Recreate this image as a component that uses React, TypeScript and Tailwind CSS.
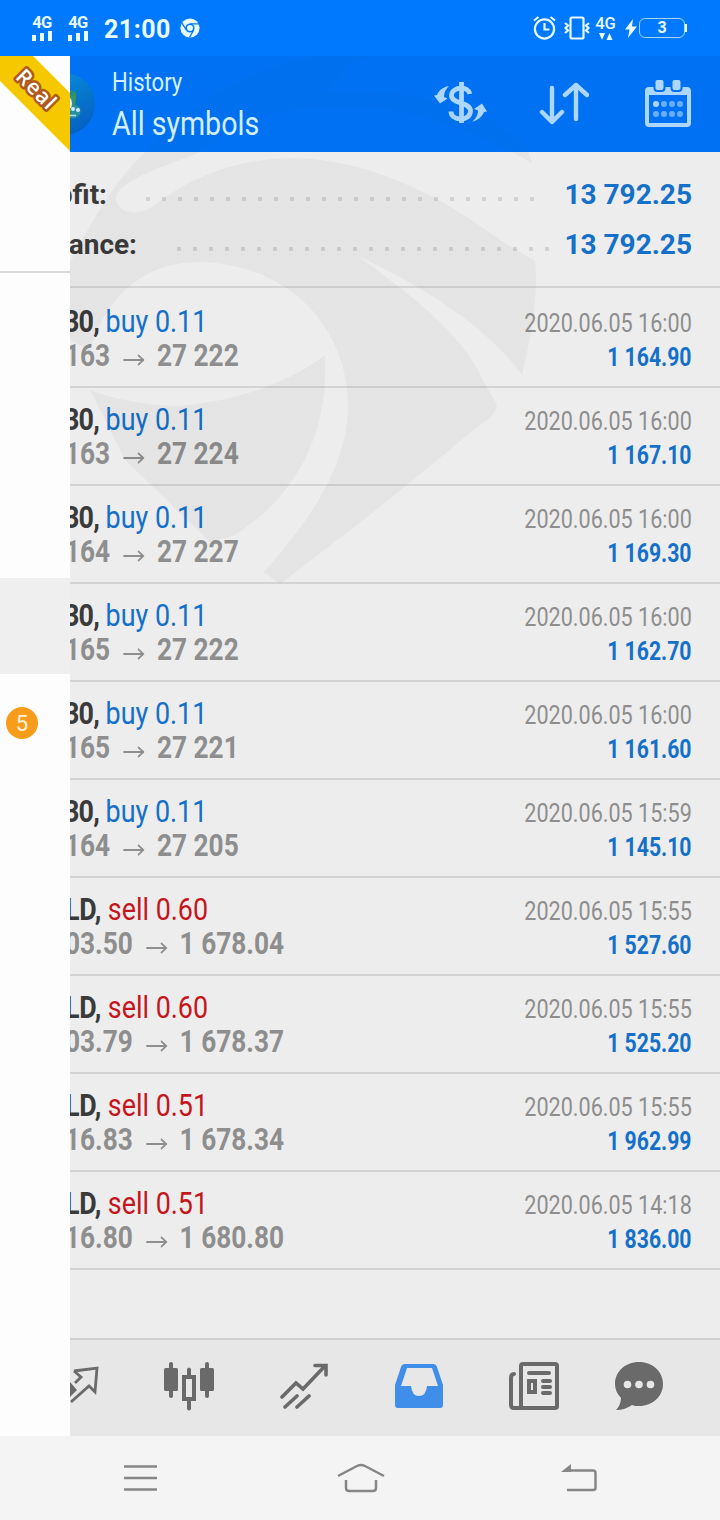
import { clsx } from "clsx";

type Deal = {
  symbol: string;
  side: "buy" | "sell";
  volume: string;
  open: string;
  close: string;
  time: string;
  profit: string;
};

const deals: Deal[] = [
  { symbol: "30", side: "buy", volume: "0.11", open: "163", close: "27 222", time: "2020.06.05 16:00", profit: "1 164.90" },
  { symbol: "30", side: "buy", volume: "0.11", open: "163", close: "27 224", time: "2020.06.05 16:00", profit: "1 167.10" },
  { symbol: "30", side: "buy", volume: "0.11", open: "164", close: "27 227", time: "2020.06.05 16:00", profit: "1 169.30" },
  { symbol: "30", side: "buy", volume: "0.11", open: "165", close: "27 222", time: "2020.06.05 16:00", profit: "1 162.70" },
  { symbol: "30", side: "buy", volume: "0.11", open: "165", close: "27 221", time: "2020.06.05 16:00", profit: "1 161.60" },
  { symbol: "30", side: "buy", volume: "0.11", open: "164", close: "27 205", time: "2020.06.05 15:59", profit: "1 145.10" },
  { symbol: "LD", side: "sell", volume: "0.60", open: "03.50", close: "1 678.04", time: "2020.06.05 15:55", profit: "1 527.60" },
  { symbol: "LD", side: "sell", volume: "0.60", open: "03.79", close: "1 678.37", time: "2020.06.05 15:55", profit: "1 525.20" },
  { symbol: "LD", side: "sell", volume: "0.51", open: "16.83", close: "1 678.34", time: "2020.06.05 15:55", profit: "1 962.99" },
  { symbol: "LD", side: "sell", volume: "0.51", open: "16.80", close: "1 680.80", time: "2020.06.05 14:18", profit: "1 836.00" },
];

function Signal() {
  return (
    <div className="flex w-5 flex-col items-center">
      <span className="text-[16.5px] leading-[13px] font-bold tracking-[-0.5px]">4G</span>
      <svg className="mt-[2px] h-[10px] w-5" viewBox="0 0 20 10" fill="currentColor">
        <rect x="0" y="4" width="4" height="6" />
        <rect x="8" y="2" width="4" height="8" />
        <rect x="16" y="0" width="4" height="10" />
      </svg>
    </div>
  );
}

function StatusBar() {
  return (
    <div className="flex h-14 items-center bg-[#0079ff] pr-[32px] pl-8 text-[#e9fbff]">
      <Signal />
      <div className="w-4" />
      <Signal />
      <span className="ml-4 w-[67px] pt-[3px] text-[25px] leading-7 font-bold tracking-[0.5px] whitespace-nowrap">21:00</span>
      <svg className="ml-[9px] size-5" viewBox="0 0 20 20">
        <circle cx="10" cy="10" r="9.6" fill="currentColor" />
        <circle cx="10" cy="10" r="4.6" fill="#0079ff" />
        <circle cx="10" cy="10" r="3" fill="currentColor" />
        <path d="M10 5.8h9M6.3 12 1.8 4.8M13.6 12.2 9.5 19.4" stroke="#0079ff" strokeWidth="1.3" />
      </svg>
      <svg className="ml-auto h-[24px] w-[23px]" viewBox="0 0 23 24" fill="none" stroke="currentColor" strokeWidth="2.2">
        <circle cx="11.5" cy="13" r="9.6" />
        <path d="M11.5 7v6.5h5M1 4.5 5.5 1M22 4.5 17.5 1" />
      </svg>
      <svg className="ml-[8px] h-[24px] w-[26px]" viewBox="0 0 26 24" fill="none" stroke="currentColor" strokeWidth="2.2">
        <rect x="6.5" y="1.5" width="13" height="21" rx="1.5" />
        <path d="M1 7l3 2.5-2.5 2.5 2.5 2.5L1 17M25 7l-3 2.5 2.5 2.5-2.5 2.5L25 17" />
      </svg>
      <div className="ml-[5px] flex w-[21px] flex-col items-center">
        <span className="text-[16.5px] leading-[14px] font-medium">4G</span>
        <svg className="mt-px h-[8px] w-[14px]" viewBox="0 0 14 8" fill="currentColor">
          <path d="M0 1h6L3 8zM7.5 8h6l-3-7z" />
        </svg>
      </div>
      <svg className="ml-[9px] h-[19px] w-[12px]" viewBox="0 0 12 19" fill="currentColor">
        <path d="M8 0 0 10.5h4.5L3 19 12 7.5H7z" />
      </svg>
      <div className="ml-[2px] flex h-[20px] w-[46px] items-center justify-center rounded-[6px] border-[1.5px] border-[#9fd9ff] text-[16px] font-bold">
        3
      </div>
      <div className="mr-px h-[8px] w-[2px] bg-current" />
    </div>
  );
}

function Header() {
  return (
    <header className="flex h-24 items-center overflow-hidden bg-[#0071f2] pr-[29px] text-[#d5f0ff]">
      <svg className="h-[64px] w-[26px] shrink-0" viewBox="0 0 26 64">
        <defs>
          <linearGradient id="sea" x1="0" y1="0" x2="0.6" y2="1">
            <stop offset="0" stopColor="#0a93e6" />
            <stop offset="0.6" stopColor="#0677cc" />
            <stop offset="1" stopColor="#0462c4" />
          </linearGradient>
        </defs>
        <circle cx="-6" cy="32" r="31" fill="url(#sea)" />
        <path d="M0 22c4 1 5 5 5 11 4 0 7 4 5 9-2 4-6 5-10 4z" fill="#2b8fa0" />
        <path d="M0 26c2 2 2.500 6 1 10H0z" fill="#fff" />
        <path d="M1 19c3 3 4 8 3 15M4 33c2-7 2-10 0-14" fill="none" stroke="#3f9a3c" strokeWidth="1.5" />
        <circle cx="3" cy="37" r="2" fill="#cfeeff" />
        <circle cx="8" cy="38" r="2" fill="#cfeeff" />
        <path d="M0 43.5h6" stroke="#a9dcf5" strokeWidth="1.5" />
      </svg>
      <div className="ml-4 flex flex-col pt-px">
        <span className="origin-left scale-x-[0.85] text-[26px] leading-[36px] whitespace-nowrap">History</span>
        <span className="origin-left scale-x-[0.842] text-[34px] leading-[46px] whitespace-nowrap">All symbols</span>
      </div>
      <div className="ml-auto flex items-center pb-[3px] text-[#add7ff]">
        <svg className="h-[44px] w-[54px]" viewBox="0 0 54 44" fill="none" stroke="currentColor">
          <path d="M36 13c-1-4-5-6-9-6-5 0-9.500 3-9.500 7.500 0 9 19 6 19 15.500 0 5-4.500 8-9.500 8-6 0-10-3-10-7.500" strokeWidth="4.800" />
          <path d="M27.500 1v41" strokeWidth="4.800" />
          <path d="M15 5C8 6 4 11 3 14L0 14.500 6 22.500 13.500 17.500 10 16C10 11 12 8 15 5z" fill="currentColor" stroke="none" />
          <path d="M38 41c7-2 11-7 12-10l3-.5L48 22.500 40 28l4 1.500c0 5-3 9-6 11.500z" fill="currentColor" stroke="none" />
        </svg>
        <svg className="ml-[51px] h-[44px] w-[50px]" viewBox="0 0 50 44" fill="none" stroke="currentColor" strokeWidth="4.4" strokeLinecap="round" strokeLinejoin="round">
          <path d="M13 7v34M3 31l10 10 10-10M37 38V4M26 14 37 4l11 10" />
        </svg>
        <svg className="ml-[56px] h-[48px] w-[46px]" viewBox="0 0 46 48" fill="currentColor">
          <rect x="2" y="10" width="42" height="36" rx="2" fill="none" stroke="currentColor" strokeWidth="4" />
          <path d="M2 9h42v7H2z" />
          <rect x="9.5" y="0" width="10" height="12" rx="3" stroke="#0071f2" strokeWidth="2" />
          <rect x="26.5" y="0" width="10" height="12" rx="3" stroke="#0071f2" strokeWidth="2" />
          <circle cx="11" cy="25" r="3" />
          <g opacity="0.6">
            <circle cx="19" cy="25" r="3" />
            <circle cx="27" cy="25" r="3" />
            <circle cx="35" cy="25" r="3" />
            <circle cx="11" cy="35" r="3" />
            <circle cx="19" cy="35" r="3" />
            <circle cx="27" cy="35" r="3" />
            <circle cx="35" cy="35" r="3" />
          </g>
        </svg>
      </div>
    </header>
  );
}

function Summary() {
  return (
    <section className="flex h-[136px] shrink-0 flex-col overflow-hidden border-b-2 border-[#d4d4d4] pt-[18px] pr-7 text-[28px] leading-[50px] font-bold text-[#3a3a3a]">
      <div className="flex">
        <span className="-ml-[15px] flex w-[52px] justify-end">ofit:</span>
        <div className="ml-[33px] h-4 w-[400px] translate-y-[21px] bg-[radial-gradient(circle,#d2d2d2_2px,transparent_2.600px)] bg-[length:16px_16px]" />
        <span className="ml-auto text-[#1470c8]">13 792.25</span>
      </div>
      <div className="flex">
        <span className="-ml-[14px] flex w-[81px] justify-end">ance:</span>
        <div className="ml-[34px] h-4 w-[384px] translate-y-[21px] bg-[radial-gradient(circle,#d2d2d2_2px,transparent_2.600px)] bg-[length:16px_16px]" />
        <span className="ml-auto text-[#1470c8]">13 792.25</span>
      </div>
    </section>
  );
}

function DealRow({ deal }: { deal: Deal }) {
  const buy = deal.side === "buy";
  return (
    <li className="flex h-[98px] justify-between overflow-hidden border-b-2 border-[#d4d4d4] pr-7 leading-[34px] whitespace-nowrap">
      <div className="flex flex-col items-start pt-[14px] text-[32px]">
        <span className={clsx("origin-left scale-x-[0.84]", buy ? "-ml-[6px]" : "-ml-[5px]")}>
          <b className={clsx("text-[#3a3a3a]", buy ? "tracking-[-1px]" : "tracking-[-0.4px]")}>{deal.symbol},</b>{" "}
          <span className={buy ? "text-[#1470c8]" : "text-[#c4161c]"}>
            {deal.side} {deal.volume}
          </span>
        </span>
        <span className="-ml-[5px] flex origin-left scale-x-[0.82] font-bold text-[#8e8e8e]">
          {deal.open}
          <svg className="mr-[15px] ml-[16px] mt-[16px] h-[12px] w-[26px]" viewBox="0 0 26 12" fill="none" stroke="currentColor" strokeWidth="2">
            <path d="M0 6h24M18 1l6.5 5L18 11" />
          </svg>
          {deal.close}
        </span>
      </div>
      <div className="flex flex-col items-end pt-[16px] text-[26px]">
        <span className="origin-right scale-x-[0.83] text-[#8e8e8e]">{deal.time}</span>
        <span className="origin-right scale-x-[0.815] font-bold text-[#1470c8]">{deal.profit}</span>
      </div>
    </li>
  );
}

function TabBar() {
  return (
    <nav className="flex h-[98px] shrink-0 items-center border-t-2 border-[#d0d0d0] bg-[#e7e7e7] pb-1 text-[#6a6a6a]">
      <div className="w-[61.5px] pb-1">
        <svg className="h-[40px] w-[30px]" viewBox="0 0 30 40" fill="none" stroke="currentColor" strokeWidth="2.8">
          <path d="M4 7l23-3-2 24-6-6L1 38M4 7l7 6-6 6" />
          <path d="M0 18l7 8-7 7z" fill="currentColor" stroke="none" />
        </svg>
      </div>
      <div className="flex w-[115px] justify-center">
        <svg className="h-[50px] w-[50px]" viewBox="0 0 50 50" fill="currentColor">
          <rect x="0" y="7" width="14" height="23" rx="1.5" />
          <rect x="5" y="1" width="4" height="36" rx="2" />
          <rect x="36" y="7" width="14" height="23" rx="1.5" />
          <rect x="41" y="1" width="4" height="36" rx="2" />
          <rect x="20" y="16" width="10" height="22" fill="none" stroke="currentColor" strokeWidth="4" />
          <path d="M23 8q2-3 4 0v7h-4zM23 39h4v9q-2 3-4 0z" />
        </svg>
      </div>
      <div className="flex w-[115px] justify-center">
        <svg className="h-[46px] w-[48px]" viewBox="0 0 48 46" fill="none" stroke="currentColor" strokeWidth="3.6" strokeLinecap="round">
          <path d="M2 34 16 20l7 6L45 3M35 2.5h11V12M5 44l12-11M17 44l12-11" />
        </svg>
      </div>
      <div className="flex w-[115px] justify-center">
        <svg className="h-[46px] w-[48px]" viewBox="0 0 48 46">
          <path fill="#3f8eea" fillRule="evenodd" d="M10 1h28q3 0 4 3l6 18v20q0 3-3 3H3q-3 0-3-3V22L6 4q1-3 4-3zM12 5 6 23h10q1 10 8 10t8-10h11L37 5z" />
        </svg>
      </div>
      <div className="flex w-[115px] justify-center">
        <svg className="h-[48px] w-[50px]" viewBox="0 0 50 48" fill="none" stroke="currentColor" strokeWidth="4" strokeLinecap="round">
          <rect x="12" y="2" width="36" height="44" rx="2" />
          <path d="M5 12q-3 0-3 4v27q0 3 3 3h7M20 11h20M34 19h7M34 25h7M34 31h7" />
          <rect x="20" y="19" width="6" height="11" />
        </svg>
      </div>
      <div className="flex w-[95px] justify-center">
        <svg className="h-[48px] w-[48px]" viewBox="0 0 48 48">
          <path fill="currentColor" d="M24 0c14 0 24 10 24 22S38 44 24 44c-3 0-5 0-7-1-4 3-10 5-16 5 3-3 5-8 5-12-4-4-6-9-6-14C0 10 10 0 24 0z" />
          <g fill="#e7e7e7">
            <circle cx="12.5" cy="22.5" r="3.8" />
            <circle cx="24" cy="22.5" r="3.8" />
            <circle cx="35.5" cy="22.5" r="3.8" />
          </g>
        </svg>
      </div>
    </nav>
  );
}

// Account drawer, only its right edge is on screen while it slides in
function Drawer() {
  return (
    <aside className="flex w-[70px] shrink-0 flex-col bg-[#fdfdfd]">
      <div className="h-[217px] border-b-2 border-[#d8d8d8]">
        <svg className="h-[96px] w-[70px]" viewBox="0 0 70 96">
          <path d="M0 0h33l37 37v58L0 25z" fill="#f5c800" />
          <text
            x="0"
            y="0"
            transform="translate(37 33) rotate(45)"
            textAnchor="middle"
            dominantBaseline="central"
            className="fill-white stroke-[#b0591c] stroke-[5px] font-['Open_Sans'] text-[21px] font-semibold tracking-[1px] [paint-order:stroke] [stroke-linejoin:round]"
          >
            Real
          </text>
        </svg>
      </div>
      <div className="mt-[305px] h-[96px] bg-[#efefef]" />
      <div className="mt-[33px] ml-[6px] flex size-8 items-center justify-center rounded-full bg-[#f89c1c] text-[22px] text-[#fff3dc]">
        5
      </div>
    </aside>
  );
}

function SystemBar() {
  return (
    <div className="flex h-[84px] items-center bg-[#f4f4f4]">
      <svg className="ml-[124px] h-[26px] w-[33px]" viewBox="0 0 33 26" stroke="#868686" strokeWidth="2.6">
        <path d="M0 1.5h33M0 13h33M0 24.5h33" />
      </svg>
      <svg className="ml-[180px] h-[30px] w-[48px]" viewBox="0 0 48 30" fill="none" stroke="#868686" strokeWidth="2.5">
        <path d="M1 13 20 3q4-2 8 0l19 10M9 17v8q0 3 3 3h24q3 0 3-3v-8" />
      </svg>
      <svg className="ml-[176px] h-[28px] w-[36px]" viewBox="0 0 36 28" fill="none" stroke="#868686" strokeWidth="2.5">
        <path d="M8 6.5h24q2.5 0 2.5 2.5v15q0 2-2.5 2H6" />
        <path d="M0 8 10 0v8z" fill="#868686" stroke="none" />
      </svg>
    </div>
  );
}

// Fainter over the blue header than over the list
function Watermark() {
  return (
    <svg className="pointer-events-none absolute top-0 right-0 h-[540px] w-[650px]" viewBox="70 56 650 540" fill="url(#fade)">
      <defs>
        <linearGradient id="fade" gradientUnits="userSpaceOnUse" x1="0" y1="56" x2="0" y2="596">
          <stop offset="0.178" stopColor="#000" stopOpacity="0.012" />
          <stop offset="0.178" stopColor="#000" stopOpacity="0.036" />
        </linearGradient>
      </defs>
      <path d="M145 152C190 105 250 66 320 56H372L345 66Q340 80 325 92C430 85 500 115 528 150L532 163C490 140 420 105 340 106C260 108 225 130 200 152C170 165 115 180 116 200C120 215 140 216 155 205C190 178 235 158 295 158C370 160 440 195 500 240L535 261Q540 300 522 375C490 330 430 290 358 256C410 295 460 330 483 380L497 405Q496 415 480 425L370 515L280 584L264 572C310 520 345 470 348 410C350 330 290 262 195 262C140 264 105 300 90 350L70 340V262C90 225 115 180 145 152Z" />
      <path d="M325 355C300 375 250 400 180 406Q130 405 90 390L125 460L210 542L235 535C290 500 330 440 325 355Z" />
    </svg>
  );
}

export default function App() {
  return (
    <div className="flex h-[1520px] w-[720px] flex-col overflow-hidden bg-[#ededed] font-['Roboto',sans-serif]">
      <StatusBar />
      <div className="relative flex h-[1380px]">
        <Drawer />
        <main className="flex min-w-0 flex-1 flex-col overflow-hidden">
          <Header />
          <Summary />
          <ul className="flex-1 pt-[2px]">
            {deals.map((deal, i) => (
              <DealRow key={i} deal={deal} />
            ))}
          </ul>
          <TabBar />
        </main>
        <Watermark />
      </div>
      <SystemBar />
    </div>
  );
}
